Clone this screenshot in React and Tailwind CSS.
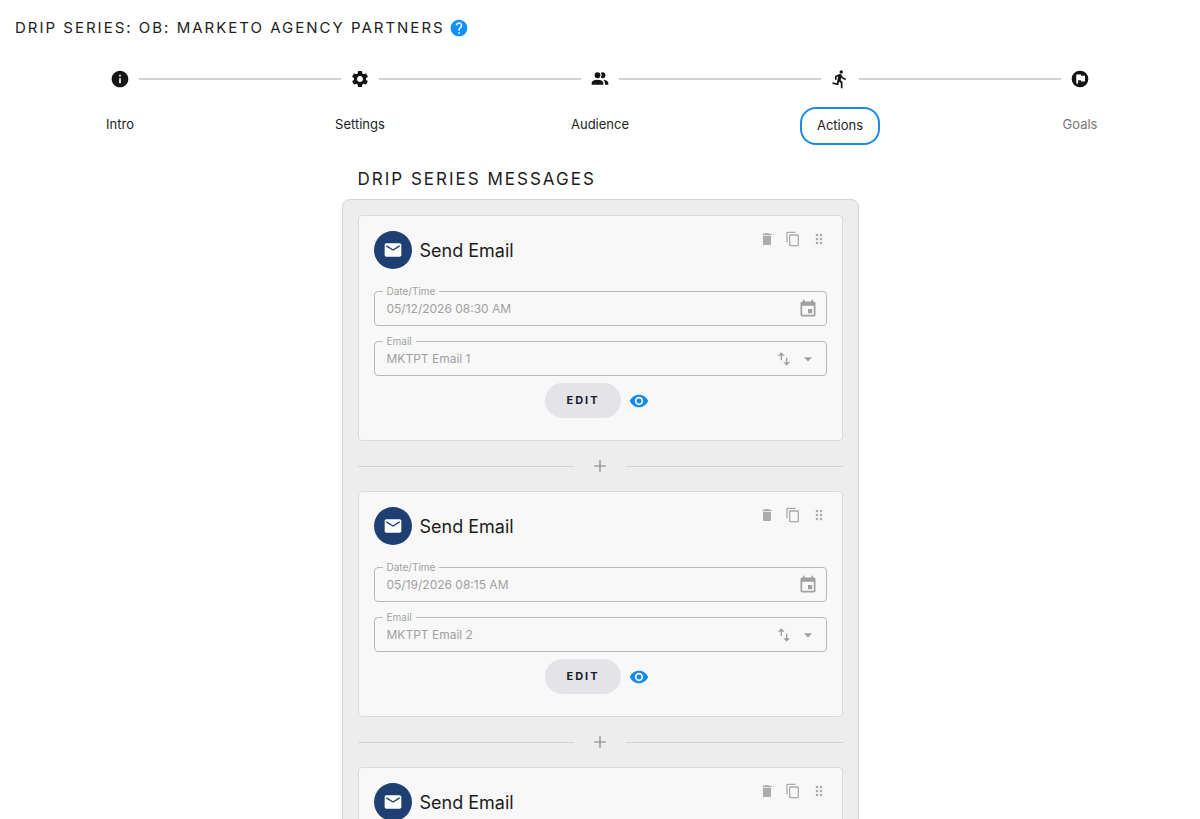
import React from 'react';
import {
  MdAdd,
  MdArrowDropDown,
  MdContentCopy,
  MdDelete,
  MdDragIndicator,
  MdEmail,
  MdEvent,
  MdHelp,
  MdInfo,
  MdSettings,
  MdVisibility,
} from 'react-icons/md';

const Icons = {
  People: (props) => (
    <svg {...props} viewBox="0 0 24 24" fill="currentColor">
      <path d="M16 17V19H2V17S2 13 9 13 16 17 16 17M12.5 7.5A3.5 3.5 0 1 0 9 11A3.5 3.5 0 0 0 12.5 7.5M15.94 13A5.32 5.32 0 0 1 18 17V19H22V17S22 13.37 15.94 13M15 4A3.39 3.39 0 0 0 13.07 4.59A5 5 0 0 1 13.07 10.41A3.39 3.39 0 0 0 15 11A3.5 3.5 0 0 0 15 4Z" />
    </svg>
  ),
  Run: (props) => (
    <svg {...props} viewBox="0 0 24 24" fill="currentColor">
      <path d="M13.5 5.5C14.59 5.5 15.5 4.58 15.5 3.5C15.5 2.38 14.59 1.5 13.5 1.5C12.39 1.5 11.5 2.38 11.5 3.5C11.5 4.58 12.39 5.5 13.5 5.5M9.89 19.38L10.89 15L13 17V23H15V15.5L12.89 13.5L13.5 10.5C14.79 12 16.79 13 19 13V11C17.09 11 15.5 10 14.69 8.58L13.69 7C13.29 6.38 12.69 6 12 6C11.69 6 11.5 6.08 11.19 6.08L6 8.28V13H8V9.58L9.79 8.88L8.19 17L3.29 16L2.89 18L9.89 19.38Z" />
    </svg>
  ),
  FlagCircle: (props) => (
    <svg {...props} viewBox="0 0 24 24" fill="none">
      <circle cx="12" cy="12" r="10" fill="currentColor" />
      <path d="M7.5 17.5V6.5H13L13.6 8H18V15H13.4L12.8 13.5H9.8V17.5Z" fill="white" />
    </svg>
  ),
  Swap: (props) => (
    <svg {...props} viewBox="0 0 24 24" fill="none" stroke="currentColor" strokeWidth="2">
      <path d="M8 14V4M16 10V20" />
      <path d="M3 7L8 2L13 7ZM11 17L16 22L21 17Z" fill="currentColor" stroke="none" />
    </svg>
  ),
};

const steps = [
  { label: 'Intro', icon: MdInfo },
  { label: 'Settings', icon: MdSettings },
  { label: 'Audience', icon: Icons.People },
  { label: 'Actions', icon: Icons.Run, active: true },
  { label: 'Goals', icon: Icons.FlagCircle, muted: true },
];

const messages = [
  { id: 1, date: '05/12/2026 08:30 AM', email: 'MKTPT Email 1' },
  { id: 2, date: '05/19/2026 08:15 AM', email: 'MKTPT Email 2' },
  { id: 3, date: '05/26/2026 08:15 AM', email: 'MKTPT Email 3' },
];

const Stepper = () => (
  <nav aria-label="Steps" className="mt-[29px] grid grid-cols-5">
    {steps.map(({ label, icon: Icon, active, muted }, i) => (
      <div key={label} className="flex flex-col items-center">
        <div className="flex w-full items-center">
          <span className={`h-0.5 flex-1 ${i > 0 ? 'bg-[#d2d2d2]' : ''}`} />
          <span className="flex w-[38px] justify-center text-[#141414]">
            <Icon className="h-5 w-5" />
          </span>
          <span className={`h-0.5 flex-1 ${i < steps.length - 1 ? 'bg-[#d2d2d2]' : ''}`} />
        </div>
        {active ? (
          <button type="button" aria-current="step" className="mt-[18px] h-[38px] rounded-2xl border-2 border-[#1e88e5] px-[15px] text-[13px] text-[#222]">
            {label}
          </button>
        ) : (
          <button type="button" className={`mt-[18px] h-9 text-[13px] ${muted ? 'text-[#777]' : 'text-[#222]'}`}>
            {label}
          </button>
        )}
      </div>
    ))}
  </nav>
);

const OutlinedField = ({ id, label, value, children }) => (
  <fieldset className="flex h-10 items-center rounded border border-[#b9b9b9] px-2 text-[#a0a0a0]">
    <legend className="h-[10px] px-1 text-[10px] leading-[10px]">
      <label htmlFor={id}>{label}</label>
    </legend>
    <input id={id} type="text" defaultValue={value} disabled className="-mt-1 min-w-0 flex-1 bg-transparent px-1 text-xs leading-5" />
    {children}
  </fieldset>
);

const MessageCard = ({ message }) => (
  <section className="rounded border border-[#dadada] bg-[#f8f8f8] px-[15px] pt-[15px] pb-[22px]">
    <div className="flex items-start justify-between">
      <div className="flex items-center gap-2">
        <span className="flex h-[38px] w-[38px] items-center justify-center rounded-full bg-[#1d3f72] text-white">
          <MdEmail className="h-5 w-5" />
        </span>
        <h3 className="text-[18px] text-[#1c1c1c]">Send Email</h3>
      </div>
      <div className="flex items-center gap-[10px] text-[#acacac]">
        <button type="button" aria-label="Delete"><MdDelete className="h-4 w-4" /></button>
        <button type="button" aria-label="Duplicate"><MdContentCopy className="h-4 w-4" /></button>
        <button type="button" aria-label="Reorder"><MdDragIndicator className="h-4 w-4" /></button>
      </div>
    </div>

    <div className="mt-[17px] space-y-[10px]">
      <OutlinedField id={`date-${message.id}`} label="Date/Time" value={message.date}>
        <MdEvent className="-mt-1 h-5 w-5" />
      </OutlinedField>
      <OutlinedField id={`email-${message.id}`} label="Email" value={message.email}>
        <Icons.Swap className="-mt-1 mr-[6px] h-4 w-4" />
        <MdArrowDropDown className="-mt-1 h-5 w-5" />
      </OutlinedField>
    </div>

    <div className="mt-[7px] flex items-center justify-center gap-2 pr-[6px]">
      <button type="button" className="h-[35px] rounded-full bg-[#e4e4e8] px-[21px] text-[11px] font-bold tracking-[2px] text-[#1c1a2e]">
        EDIT
      </button>
      <button type="button" aria-label="Preview" className="text-[#1189ef]">
        <MdVisibility className="h-5 w-5" />
      </button>
    </div>
  </section>
);

const AddDivider = () => (
  <div className="flex h-[50px] items-center">
    <span className="h-px flex-1 bg-[#d2d2d2]" />
    <button type="button" aria-label="Add message" className="flex w-[52px] justify-center text-[#a0a0a0]">
      <MdAdd className="h-5 w-5" />
    </button>
    <span className="h-px flex-1 bg-[#d2d2d2]" />
  </div>
);

const App = () => (
  <div className="min-h-screen bg-white font-['Inter','Liberation_Sans',sans-serif]">
    <header className="flex items-center gap-1 px-[15px] pt-4">
      <h1 className="text-[15px] leading-6 tracking-[2px] text-[#222]">DRIP SERIES: OB: MARKETO AGENCY PARTNERS</h1>
      <button type="button" aria-label="Help" className="text-[#0d92ff]">
        <MdHelp className="h-5 w-5" />
      </button>
    </header>

    <Stepper />

    <main className="mx-auto mt-[22px] w-full max-w-[517px]">
      <h2 className="pl-4 text-[17px] leading-6 tracking-[2px] text-[#1c1c1c]">DRIP SERIES MESSAGES</h2>
      <div className="mt-2 rounded-lg border border-[#d4d4d4] bg-[#ededed] p-[15px]">
        {messages.map((message, i) => (
          <React.Fragment key={message.id}>
            {i > 0 && <AddDivider />}
            <MessageCard message={message} />
          </React.Fragment>
        ))}
      </div>
    </main>
  </div>
);

export default App;
